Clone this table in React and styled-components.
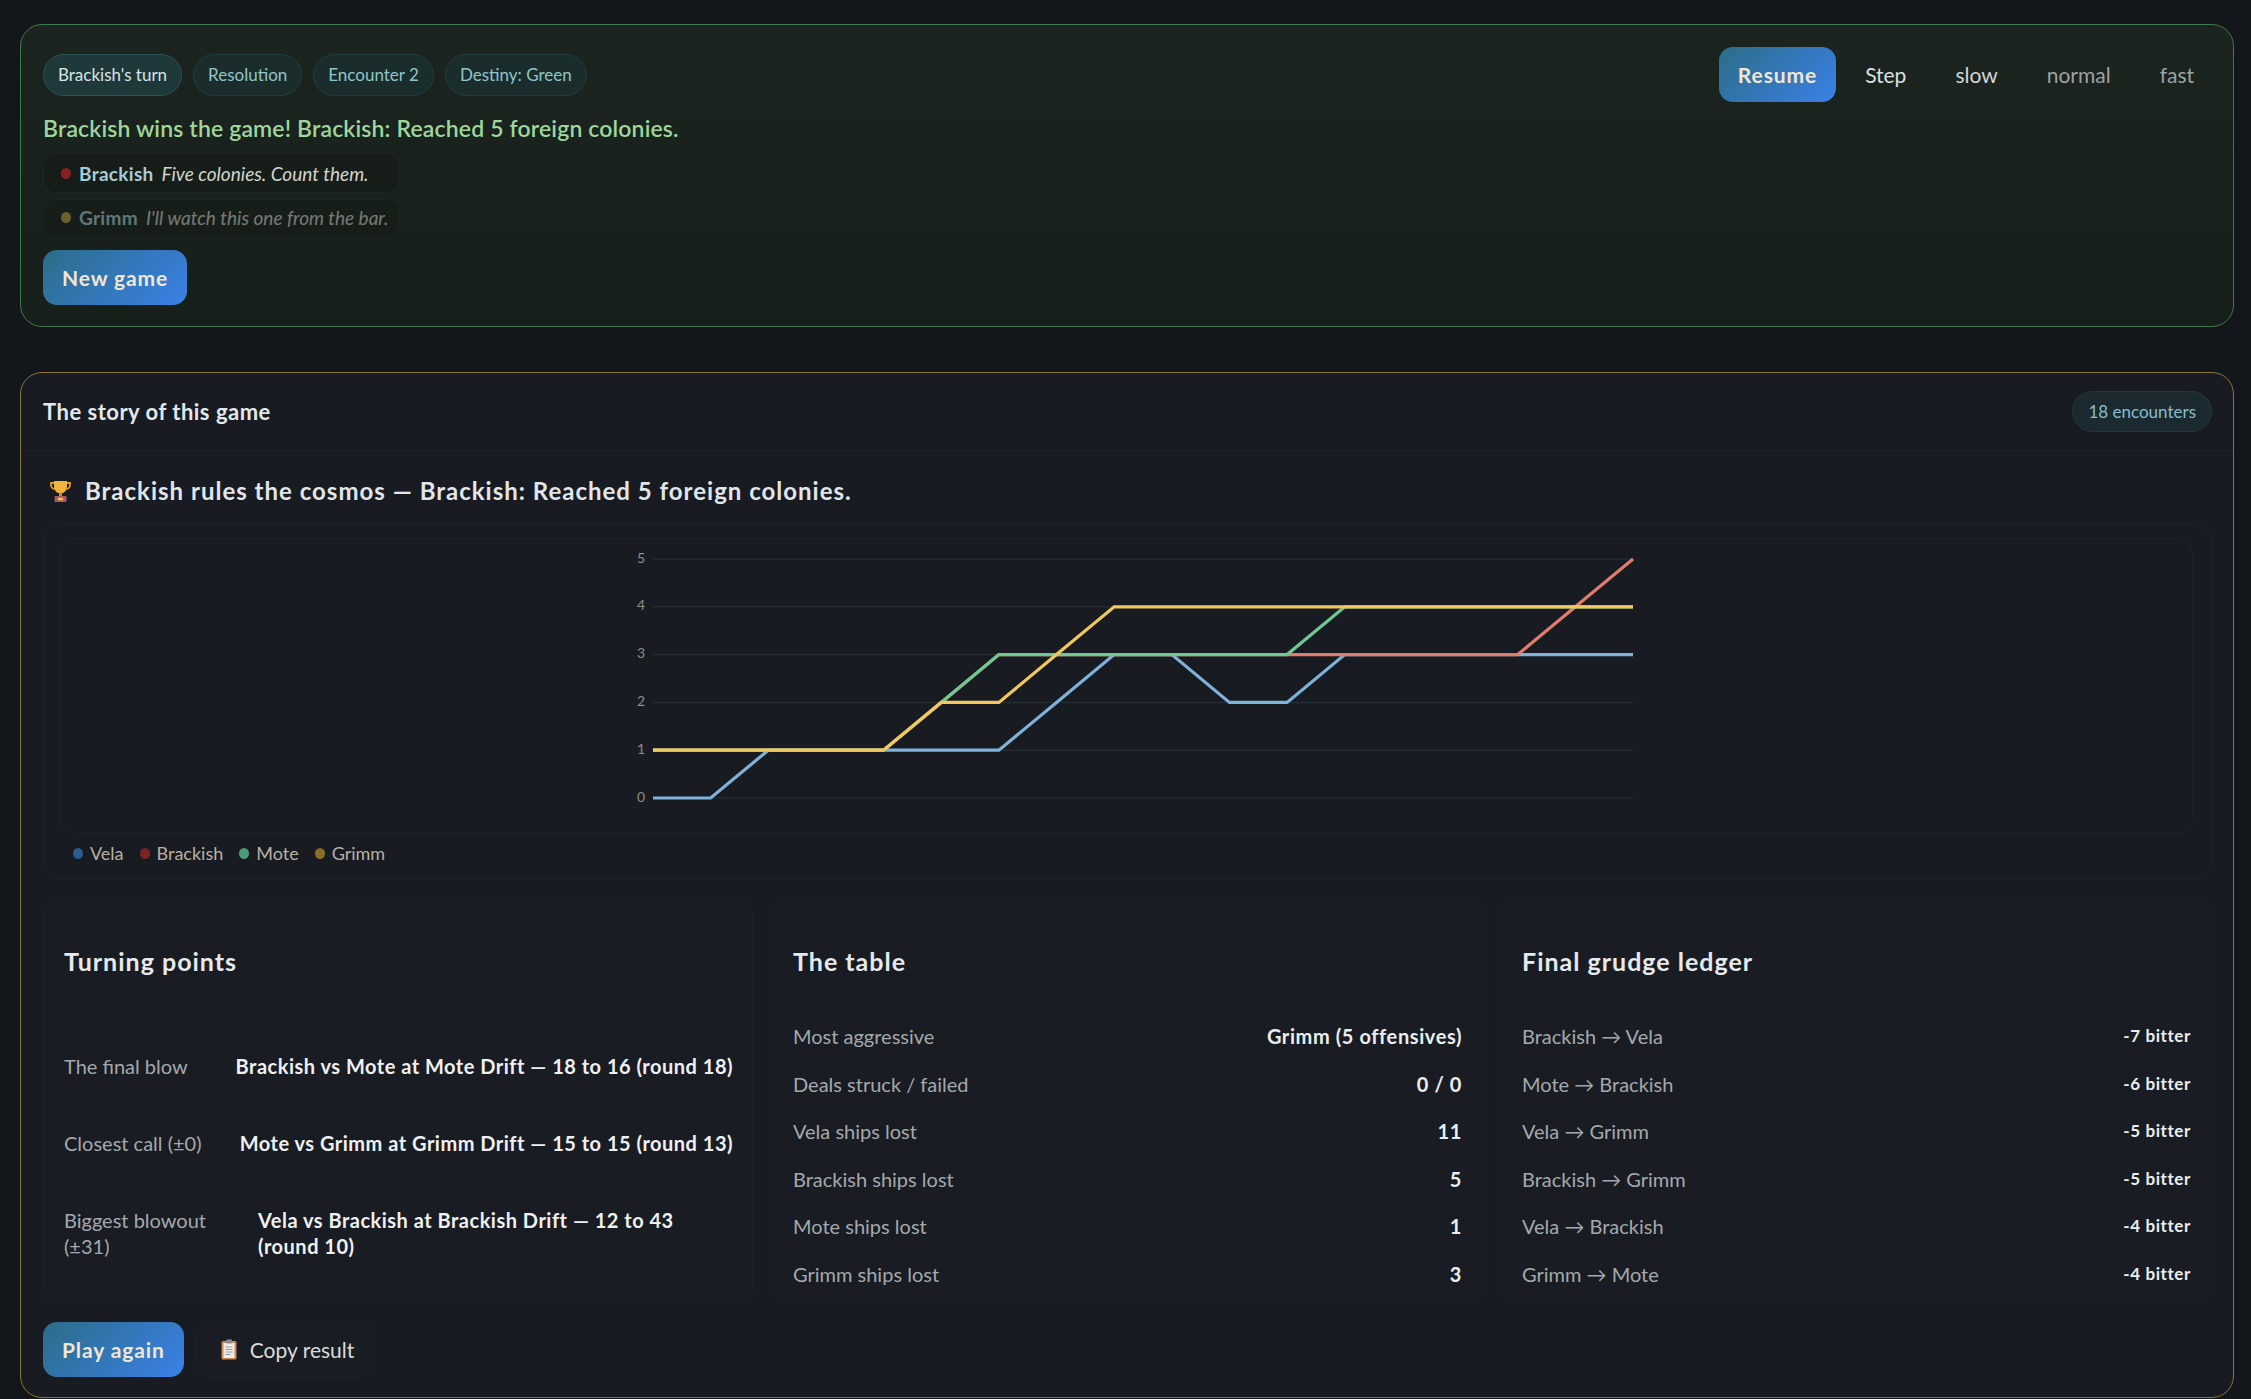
import React from 'react';
import styled, { createGlobalStyle } from 'styled-components';

const GlobalStyle = createGlobalStyle`
  html, body {
    margin: 0;
    padding: 0;
    background: #13171c;
  }
  body {
    font-family: Lato, "Noto Sans", "Liberation Sans", sans-serif;
    color: #dfe4e6;
  }
  * { box-sizing: border-box; }
`;

const SERIES = [
  { name: 'Vela', line: '#7eb2da', dot: '#2b5b8f', values: [0, 0, 1, 1, 1, 1, 1, 2, 3, 3, 2, 2, 3, 3, 3, 3, 3, 3] },
  { name: 'Brackish', line: '#e07c6c', dot: '#7d2323', values: [1, 1, 1, 1, 1, 2, 3, 3, 3, 3, 3, 3, 3, 3, 3, 3, 4, 5] },
  { name: 'Mote', line: '#6fc891', dot: '#4b9b7b', values: [1, 1, 1, 1, 1, 2, 3, 3, 3, 3, 3, 3, 4, 4, 4, 4, 4, 4] },
  { name: 'Grimm', line: '#f1c75e', dot: '#8c6d24', values: [1, 1, 1, 1, 1, 2, 2, 3, 4, 4, 4, 4, 4, 4, 4, 4, 4, 4] },
];

const TURNING = [
  ['The final blow', 'Brackish vs Mote at Mote Drift — 18 to 16 (round 18)'],
  ['Closest call (±0)', 'Mote vs Grimm at Grimm Drift — 15 to 15 (round 13)'],
  ['Biggest blowout (±31)', 'Vela vs Brackish at Brackish Drift — 12 to 43 (round 10)'],
];

const TABLE = [
  ['Most aggressive', 'Grimm (5 offensives)'],
  ['Deals struck / failed', '0 / 0'],
  ['Vela ships lost', '11'],
  ['Brackish ships lost', '5'],
  ['Mote ships lost', '1'],
  ['Grimm ships lost', '3'],
];

const GRUDGES = [
  ['Brackish → Vela', '-7 bitter'],
  ['Mote → Brackish', '-6 bitter'],
  ['Vela → Grimm', '-5 bitter'],
  ['Brackish → Grimm', '-5 bitter'],
  ['Vela → Brackish', '-4 bitter'],
  ['Grimm → Mote', '-4 bitter'],
];

// chart geometry (svg px)
const X0 = 46;
const X1 = 1026;
const STEP = (X1 - X0) / 17;
const yOf = (v) => 259 - v * 47.8;

function Trophy() {
  return (
    <svg width="23" height="24" viewBox="0 0 23 24">
      <path d="M5 2h13v6a6.5 6.5 0 0 1-13 0z" fill="#f0b43a" />
      <path d="M5 4H2v2a4 4 0 0 0 4 4" fill="none" stroke="#e39a2a" strokeWidth="1.8" />
      <path d="M18 4h3v2a4 4 0 0 1-4 4" fill="none" stroke="#e39a2a" strokeWidth="1.8" />
      <rect x="10" y="13.5" width="3" height="4" fill="#d48a22" />
      <rect x="5.5" y="17" width="12" height="6" rx="1" fill="#a8586a" />
      <rect x="9" y="18.8" width="5" height="2.4" fill="#f0c24a" />
    </svg>
  );
}

function Clipboard() {
  return (
    <svg width="16" height="21" viewBox="0 0 16 21">
      <rect x="0.5" y="2" width="15" height="18.5" rx="1.5" fill="#c98a58" />
      <rect x="2.5" y="4" width="11" height="15" fill="#f1ede6" />
      <rect x="5" y="0.5" width="6" height="4" rx="1" fill="#8c8c94" />
      <path d="M4.5 8h7M4.5 10.5h7M4.5 13h7M4.5 15.5h5" stroke="#9a9aa4" strokeWidth="1" />
    </svg>
  );
}

function Chart() {
  return (
    <ChartSvg width="1040" height="293" viewBox="0 0 1040 293">
      {[0, 1, 2, 3, 4, 5].map((v) => (
        <g key={v}>
          <line x1={X0} x2={X1} y1={yOf(v)} y2={yOf(v)} stroke="#262a31" strokeWidth="1.5" />
          <text x="38" y={yOf(v)} textAnchor="end" dominantBaseline="middle" fill="#8d8f8b" fontSize="14">
            {v}
          </text>
        </g>
      ))}
      {SERIES.map((s) => (
        <polyline
          key={s.name}
          fill="none"
          stroke={s.line}
          strokeWidth="3.2"
          points={s.values.map((v, i) => `${X0 + i * STEP},${yOf(v)}`).join(' ')}
        />
      ))}
    </ChartSvg>
  );
}

export default function App() {
  return (
    <>
      <GlobalStyle />
      <Page>
        <TopPanel>
          <TopRow>
            <Chips>
              <Chip $active>Brackish's turn</Chip>
              <Chip>Resolution</Chip>
              <Chip>Encounter 2</Chip>
              <Chip>Destiny: Green</Chip>
            </Chips>
            <Controls>
              <PrimaryButton>Resume</PrimaryButton>
              <GhostButton $tone="#dcdfe0">Step</GhostButton>
              <GhostButton $tone="#d2d5d5">slow</GhostButton>
              <GhostButton $tone="#9ea2a4">normal</GhostButton>
              <GhostButton $tone="#9ea2a4">fast</GhostButton>
            </Controls>
          </TopRow>
          <WinMessage>Brackish wins the game! Brackish: Reached 5 foreign colonies.</WinMessage>
          <Quotes>
            <Quote>
              <Dot $color="#8b1f1f" />
              <Speaker>Brackish</Speaker>
              <Line>Five colonies. Count them.</Line>
            </Quote>
            <Quote $faded>
              <Dot $color="#c2a040" />
              <Speaker>Grimm</Speaker>
              <Line>I'll watch this one from the bar.</Line>
            </Quote>
          </Quotes>
          <PrimaryButton>New game</PrimaryButton>
        </TopPanel>

        <StoryPanel>
          <StoryHeader>
            <StoryTitle>The story of this game</StoryTitle>
            <CountChip>18 encounters</CountChip>
          </StoryHeader>
          <StoryBody>
            <Headline>
              <Trophy />
              Brackish rules the cosmos — Brackish: Reached 5 foreign colonies.
            </Headline>

            <ChartCard>
              <ChartFrame>
                <Chart />
              </ChartFrame>
              <Legend>
                {SERIES.map((s) => (
                  <LegendItem key={s.name}>
                    <Dot $color={s.dot} />
                    {s.name}
                  </LegendItem>
                ))}
              </Legend>
            </ChartCard>

            <Cards>
              <Card>
                <CardTitle>Turning points</CardTitle>
                <TurningList>
                  {TURNING.map(([label, value]) => (
                    <TurningRow key={label}>
                      <TurningLabel>{label}</TurningLabel>
                      <TurningValue>{value}</TurningValue>
                    </TurningRow>
                  ))}
                </TurningList>
              </Card>
              <Card>
                <CardTitle>The table</CardTitle>
                <StatList>
                  {TABLE.map(([label, value]) => (
                    <StatRow key={label}>
                      <RowLabel>{label}</RowLabel>
                      <StatValue>{value}</StatValue>
                    </StatRow>
                  ))}
                </StatList>
              </Card>
              <Card>
                <CardTitle>Final grudge ledger</CardTitle>
                <StatList>
                  {GRUDGES.map(([label, value]) => (
                    <StatRow key={label}>
                      <RowLabel>{label}</RowLabel>
                      <StatValue $small>{value}</StatValue>
                    </StatRow>
                  ))}
                </StatList>
              </Card>
            </Cards>

            <Footer>
              <PrimaryButton>Play again</PrimaryButton>
              <CopyButton>
                <Clipboard />
                Copy result
              </CopyButton>
            </Footer>
          </StoryBody>
        </StoryPanel>
      </Page>
    </>
  );
}

const Page = styled.div`
  padding: 24px 17px 0 20px;
  display: flex;
  flex-direction: column;
  gap: 45px;
`;

const TopPanel = styled.section`
  border: 1px solid #3d7a4c;
  border-radius: 22px;
  background: linear-gradient(180deg, #1b241e 0%, #171f1a 100%);
  padding: 22px 19px 21px 22px;
  display: flex;
  flex-direction: column;
  align-items: flex-start;
`;

const TopRow = styled.div`
  width: 100%;
  display: flex;
  align-items: center;
  justify-content: space-between;
`;

const Chips = styled.div`
  display: flex;
  gap: 11px;
`;

const Chip = styled.span`
  height: 42px;
  display: inline-flex;
  align-items: center;
  padding: 0 14px;
  border-radius: 21px;
  font-size: 17px;
  background: ${(p) => (p.$active ? '#1f3839' : '#1a2c2b')};
  border: 1px solid ${(p) => (p.$active ? '#2b5154' : '#213d3b')};
  color: ${(p) => (p.$active ? '#d6e4e4' : '#8fc6cc')};
`;

const Controls = styled.div`
  display: flex;
  align-items: center;
  gap: 9px;
`;

const PrimaryButton = styled.button`
  height: 55px;
  padding: 0 19px;
  border: none;
  border-radius: 14px;
  background: linear-gradient(135deg, #2c6d88 0%, #3a81e8 100%);
  color: #f3e6cf;
  font-family: inherit;
  font-size: 21px;
  font-weight: 700;
  letter-spacing: 0.9px;
`;

const GhostButton = styled.button`
  height: 55px;
  padding: 0 20px;
  border: none;
  background: transparent;
  color: ${(p) => p.$tone};
  font-family: inherit;
  font-size: 21px;
`;

const WinMessage = styled.div`
  margin-top: 10px;
  font-size: 23px;
  line-height: 32px;
  font-weight: 600;
  letter-spacing: 0.15px;
  color: #9ed69c;
`;

const Quotes = styled.div`
  margin: 9px 0 14px;
  display: flex;
  flex-direction: column;
  gap: 6px;
`;

const Quote = styled.div`
  height: ${(p) => (p.$faded ? 37 : 40)}px;
  display: flex;
  align-items: center;
  gap: 8px;
  padding: 0 10px 0 17px;
  border-radius: 12px;
  background: rgba(0, 0, 0, 0.1);
  border: 1px solid rgba(255, 255, 255, 0.035);
  font-size: 19px;
  opacity: ${(p) => (p.$faded ? 0.5 : 1)};
`;

const Dot = styled.span`
  width: 10px;
  height: 11px;
  border-radius: 50%;
  background: ${(p) => p.$color};
  flex-shrink: 0;
`;

const Speaker = styled.b`
  color: #a6ccd6;
  font-weight: 700;
  letter-spacing: 0.3px;
`;

const Line = styled.i`
  color: #d4d4cc;
`;

const StoryPanel = styled.section`
  border: 1px solid #8a7535;
  border-radius: 22px;
  background: #181b21;
`;

const StoryHeader = styled.header`
  display: flex;
  align-items: center;
  justify-content: space-between;
  padding: 18px 21px 18px 22px;
  border-bottom: 1px solid #1f232a;
`;

const StoryTitle = styled.h2`
  margin: 0;
  font-size: 22px;
  font-weight: 700;
  letter-spacing: 0.5px;
  color: #e3e8ea;
`;

const CountChip = styled.span`
  height: 41px;
  display: inline-flex;
  align-items: center;
  padding: 0 15px;
  border-radius: 21px;
  background: #1b2a31;
  border: 1px solid #24363e;
  color: #86bccb;
  font-size: 17px;
`;

const StoryBody = styled.div`
  padding: 24px 21px 20px 22px;
  display: flex;
  flex-direction: column;
  gap: 18px;
`;

const Headline = styled.h1`
  margin: 0 0 -2px;
  display: flex;
  align-items: center;
  gap: 13px;
  padding-left: 6px;
  font-size: 24px;
  line-height: 32px;
  font-weight: 700;
  letter-spacing: 1px;
  color: #e0e6ea;
`;

const ChartCard = styled.div`
  border: 1px solid #1e2228;
  border-radius: 18px;
  padding: 14px 18px 14px 16px;
  display: flex;
  flex-direction: column;
  gap: 8px;
`;

const ChartFrame = styled.div`
  border: 1px solid #1e2228;
  border-radius: 16px;
  height: 296px;
  display: flex;
  justify-content: center;
`;

const ChartSvg = styled.svg`
  display: block;
  font-family: Lato, "Noto Sans", sans-serif;
`;

const Legend = styled.div`
  display: flex;
  gap: 16px;
  padding-left: 13px;
  height: 22px;
  align-items: center;
`;

const LegendItem = styled.span`
  display: inline-flex;
  align-items: center;
  gap: 7px;
  font-size: 18px;
  color: #b8b0a2;
`;

const Cards = styled.div`
  display: grid;
  grid-template-columns: repeat(3, 1fr);
  gap: 18px;
`;

const Card = styled.div`
  min-height: 407px;
  border: 1px solid #1c1f25;
  border-radius: 16px;
  background: #191c22;
  padding: 0 20px 14px;
`;

const CardTitle = styled.h3`
  margin: 47px 0 0;
  font-size: 25px;
  line-height: 32px;
  font-weight: 700;
  letter-spacing: 1px;
  color: #e6eaec;
`;

const TurningList = styled.div`
  margin-top: 76px;
  display: flex;
  flex-direction: column;
  gap: 51px;
`;

const TurningRow = styled.div`
  display: flex;
  justify-content: space-between;
  gap: 24px;
  font-size: 20px;
  line-height: 26px;
`;

const RowLabel = styled.span`
  color: #a4a9ad;
`;

const TurningLabel = styled(RowLabel)`
  flex-shrink: 0;
  max-width: 170px;
`;

const TurningValue = styled.span`
  font-weight: 700;
  letter-spacing: 0.5px;
  color: #eef0f2;
`;

const StatList = styled.div`
  margin-top: 45px;
  display: flex;
  flex-direction: column;
  gap: 19.5px;
`;

const StatRow = styled.div`
  display: flex;
  justify-content: space-between;
  align-items: center;
  font-size: 20px;
  line-height: 28px;
`;

const StatValue = styled.span`
  font-weight: 700;
  letter-spacing: 0.6px;
  color: #eaeef0;
  font-size: ${(p) => (p.$small ? 17 : 20)}px;
`;

const Footer = styled.div`
  display: flex;
  gap: 11px;
`;

const CopyButton = styled.button`
  height: 55px;
  display: inline-flex;
  align-items: center;
  gap: 13px;
  padding: 0 20px 0 25px;
  border-radius: 14px;
  border: 1px solid #1c1f25;
  background: #191c22;
  color: #d8dcdd;
  font-family: inherit;
  font-size: 21px;
`;
